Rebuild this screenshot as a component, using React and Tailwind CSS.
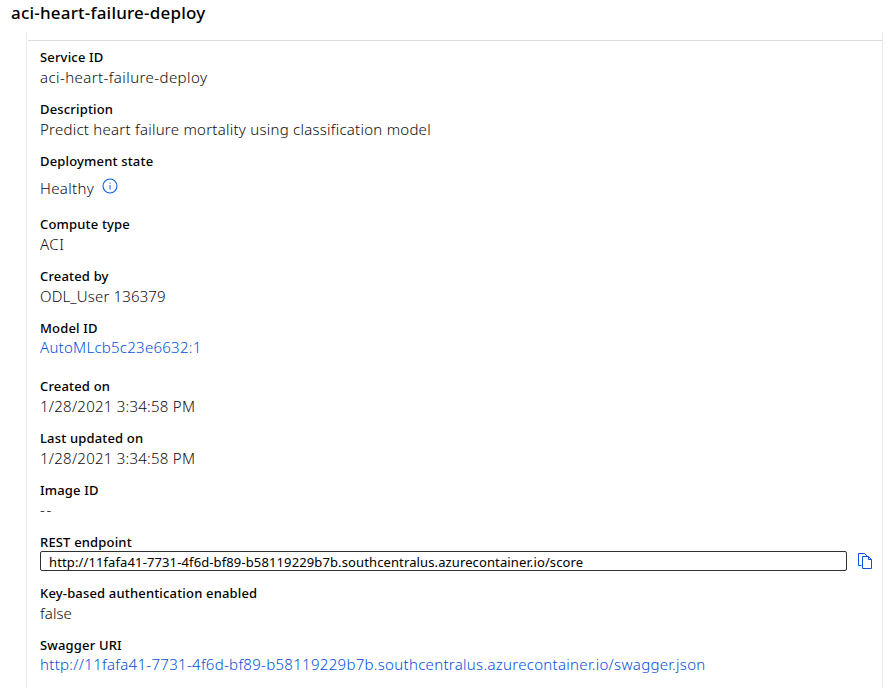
import React from 'react';

function Field({ label, children, height = 'h-5' }) {
  return (
    <div className="mb-3">
      <dt className="h-5 text-[13px] font-medium leading-5 tracking-[0.17px] text-black">{label}</dt>
      <dd className={`${height} text-[15px] font-light leading-5 text-[#0f0e0d]`}>{children}</dd>
    </div>
  );
}

function InfoIcon() {
  return (
    <svg width="16" height="16" viewBox="0 0 16 16" fill="none" stroke="#0b5cdb" className="ml-[7.5px] mt-[6.5px]">
      <circle cx="8" cy="8" r="7" strokeWidth="1.1" />
      <path d="M8 7v4.5M8 4.5v1.1" strokeWidth="1" />
    </svg>
  );
}

function CopyIcon() {
  return (
    <svg width="15" height="17" viewBox="0 0 15 17" fill="none" stroke="#0b50e0" strokeWidth="1" className="ml-[11px] mt-0.5">
      <path d="M3.5 12.5h-3V0.5h6l3 3" />
      <path d="M4.5 3.5h6l3 3v9h-9z" />
      <path d="M10.5 3.5v3h3" />
    </svg>
  );
}

export default function App() {
  return (
    <main className="h-[688px] w-[889px] overflow-hidden bg-white font-['Noto_Sans','Open_Sans',sans-serif]">
      <h1 className="h-8 pl-[11px] text-[17px] font-medium leading-[26px] tracking-[0.2px] text-black">
        aci-heart-failure-deploy
      </h1>
      <section className="ml-[26px] h-[656px] w-[857px] border-x border-[#ece9e8] pt-2">
        <div className="ml-px h-px bg-[#dcdcdc]" />
        <dl className="pl-[13px] pt-1.5">
          <Field label="Service ID"><span className="tracking-[0.42px]">aci-heart-failure-deploy</span></Field>
          <Field label="Description">
            <span className="tracking-[0.25px]">Predict heart failure mortality using classification model</span>
          </Field>
          <Field label="Deployment state" height="h-[31px]">
            <div className="flex">
              <span className="pt-[7px] tracking-[0.35px]">Healthy</span>
              <InfoIcon />
            </div>
          </Field>
          <Field label="Compute type"><span className="tracking-[0.5px]">ACI</span></Field>
          <Field label="Created by"><span className="tracking-[0.15px]">ODL_User 136379</span></Field>
          <Field label="Model ID" height="h-[26px]">
            <a className="block leading-[18px] tracking-[0.26px] text-[#0050d8]">AutoMLcb5c23e6632:1</a>
          </Field>
          <Field label="Created on"><span className="tracking-[0.25px]">1/28/2021 3:34:58 PM</span></Field>
          <Field label="Last updated on"><span className="tracking-[0.25px]">1/28/2021 3:34:58 PM</span></Field>
          <Field label="Image ID"><span className="block leading-[18px] tracking-[1.6px]">--</span></Field>
          <Field label="REST endpoint">
            <div className="-mt-px flex">
              <div className="h-5 w-[807px] rounded-xs border border-[#323130] pl-2 text-[13px] font-normal leading-[20px] tracking-[0.12px] text-black">
                http://11fafa41-7731-4f6d-bf89-b58119229b7b.southcentralus.azurecontainer.io/score
              </div>
              <CopyIcon />
            </div>
          </Field>
          <Field label="Key-based authentication enabled"><span className="tracking-[0.1px]">false</span></Field>
          <Field label="Swagger URI">
            <a className="block leading-[18px] tracking-[0.3px] text-[#0050d8]">
              http://11fafa41-7731-4f6d-bf89-b58119229b7b.southcentralus.azurecontainer.io/swagger.json
            </a>
          </Field>
        </dl>
      </section>
    </main>
  );
}
